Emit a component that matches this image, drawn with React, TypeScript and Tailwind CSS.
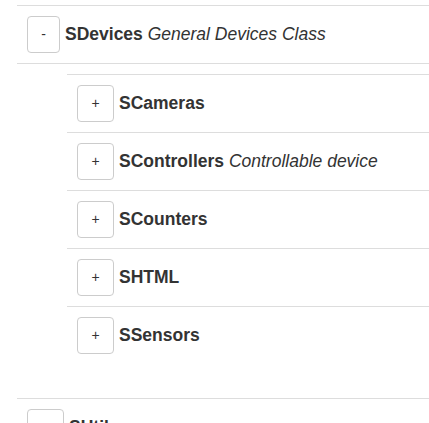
const children = [
  { name: "SCameras" },
  { name: "SControllers", desc: "Controllable device" },
  { name: "SCounters" },
  { name: "SHTML" },
  { name: "SSensors" },
]

function ToggleButton({ label, width }: { label: string; width: string }) {
  return (
    <button
      type="button"
      className={`flex h-[37px] ${width} shrink-0 items-center justify-center rounded-[4px] border border-[#cccccc] bg-white text-[14px] text-[#333333]`}
    >
      {label}
    </button>
  )
}

function NodeRow({ name, desc, toggle, width }: { name: string; desc?: string; toggle: string; width: string }) {
  return (
    <div className="flex items-center gap-[5px] p-[10px]">
      <ToggleButton label={toggle} width={width} />
      <span className="text-[17.5px] leading-none text-[#333333]">
        <b className="font-bold">{name}</b>
        {desc && <i className="italic"> {desc}</i>}
      </span>
    </div>
  )
}

export default function App() {
  return (
    <div className="h-[423px] overflow-hidden bg-white pt-[5px] pl-[17px] font-['Liberation_Sans',Arial,sans-serif]">
      <ul>
        <li className="border-t border-[#dddddd]">
          <div className="border-b border-[#dddddd]">
            <NodeRow name="SDevices" desc="General Devices Class" toggle="-" width="w-[33px]" />
          </div>
          <ul className="ml-[50px] pt-[10px] pb-[34px]">
            {children.map((c) => (
              <li key={c.name} className="border-t border-[#dddddd]">
                <NodeRow name={c.name} desc={c.desc} toggle="+" width="w-[37px]" />
              </li>
            ))}
          </ul>
        </li>
        <li className="border-t border-[#dddddd]">
          <NodeRow name="SUtils" toggle="+" width="w-[37px]" />
        </li>
      </ul>
    </div>
  )
}
